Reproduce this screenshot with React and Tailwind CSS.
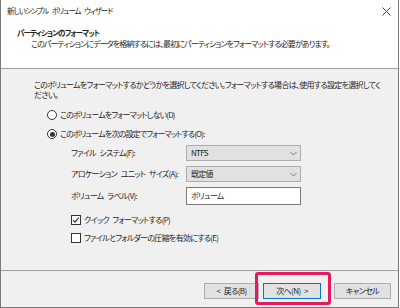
import React from "react";

const jp = "[font-family:'Noto_Sans_CJK_JP',sans-serif] [font-feature-settings:'palt']";

function T({ children, gap = "w-[3.5px]" }) {
  const parts = String(children).split(" ");
  return (
    <span>
      {parts.map((p, i) => (
        <React.Fragment key={i}>
          {i > 0 && <span className={`inline-block ${gap}`}> </span>}
          {p}
        </React.Fragment>
      ))}
    </span>
  );
}

function Radio({ checked }) {
  return (
    <span className="w-[10px] h-[10px] rounded-full border border-[#333] bg-white flex items-center justify-center shrink-0">
      {checked && <span className="w-[5px] h-[5px] rounded-full bg-[#333]" />}
    </span>
  );
}

function Check({ checked }) {
  return (
    <span className="w-[10px] h-[10px] border border-[#333] bg-white flex items-center justify-center shrink-0">
      {checked && (
        <svg width="8" height="8" viewBox="0 0 8 8">
          <path d="M1 4.2 L3 6.2 L7 1.5" fill="none" stroke="#222" strokeWidth="1.1" />
        </svg>
      )}
    </span>
  );
}

function Chevron() {
  return (
    <svg width="7" height="5" viewBox="0 0 7 5">
      <path d="M0.5 1 L3.5 4 L6.5 1" fill="none" stroke="#777" strokeWidth="0.9" />
    </svg>
  );
}

export default function App() {
  return (
    <div className={`w-[399px] h-[308px] bg-[#f0f0f0] flex flex-col border-l border-r border-b border-[#7a7a7a] text-[#1f1f1f] relative ${jp}`}>
      <div className="h-[69px] bg-white border-b border-[#a0a0a0] flex flex-col">
        <div className="h-[21px] flex items-center justify-between pl-[6px] pr-[6px] pt-[1px]">
          <span className="text-[7.5px] leading-[10px] tracking-[-1px] text-[#222]"><T>新しいシンプル ボリューム ウィザード</T></span>
          <svg width="9" height="9" viewBox="0 0 9 9" className="mr-[1px]">
            <path d="M0.5 0.5 L8.5 8.5 M8.5 0.5 L0.5 8.5" stroke="#444" strokeWidth="1" />
          </svg>
        </div>
        <div className="pl-[16px] mt-[7px] text-[7.5px] tracking-[-0.85px] leading-[10px] font-bold">パーティションのフォーマット</div>
        <div className="pl-[30px] mt-[1px] text-[8px] tracking-[-0.9px] leading-[10px]">このパーティションにデータを格納するには、最初にパーティションをフォーマットする必要があります。</div>
      </div>

      <div className="h-[202px] border-b border-[#a0a0a0] flex flex-col pl-[33px] pr-[18px] pt-[11px] text-[8px] tracking-[-0.7px]">
        <p className="leading-[10px]">このボリュームをフォーマットするかどうかを選択してください。フォーマットする場合は、使用する設定を選択してください。</p>
        <div className="mt-[9px] h-[12px] pl-[13px] flex items-center gap-[3px]">
          <Radio />
          <span className="tracking-[-0.85px]">このボリュームをフォーマットしない(D)</span>
        </div>
        <div className="mt-[7px] h-[12px] pl-[13px] flex items-center gap-[3px]">
          <Radio checked />
          <span className="tracking-[-0.85px]">このボリュームを次の設定でフォーマットする(O):</span>
        </div>
        <div className="pl-[37px] flex flex-col">
          <div className="mt-[5px] h-[16px] flex items-center">
            <span className="w-[115px]"><T>ファイル システム(F):</T></span>
            <div className="w-[115px] h-[16px] bg-[#e1e1e1] border border-[#adadad] flex items-center justify-between pl-[4px] pr-[3px]">
              <span>NTFS</span>
              <Chevron />
            </div>
          </div>
          <div className="mt-[5px] h-[16px] flex items-center">
            <span className="w-[115px]"><T>アロケーション ユニット サイズ(A):</T></span>
            <div className="w-[115px] h-[16px] bg-[#e1e1e1] border border-[#adadad] flex items-center justify-between pl-[4px] pr-[3px]">
              <span>既定値</span>
              <Chevron />
            </div>
          </div>
          <div className="mt-[5px] h-[18px] flex items-center">
            <span className="w-[115px]"><T>ボリューム ラベル(V):</T></span>
            <div className="w-[115px] h-[18px] bg-white border border-[#7a7a7a] flex items-center pl-[4px]">
              <span>ボリューム</span>
            </div>
          </div>
          <div className="mt-[9px] h-[12px] flex items-center gap-[3px]">
            <Check checked />
            <span><T>クイック フォーマットする(P)</T></span>
          </div>
          <div className="mt-[6px] h-[12px] flex items-center gap-[3px]">
            <Check />
            <span>ファイルとフォルダーの圧縮を有効にする(E)</span>
          </div>
        </div>
      </div>

      <div className="flex-1 flex items-start pt-[12px] pl-[203px] text-[8px] tracking-[-0.6px]">
        <div className="w-[55px] h-[16px] bg-[#e1e1e1] border border-[#adadad] flex items-center justify-center"><T>{"< 戻る(B)"}</T></div>
        <div className="ml-[4px] w-[58px] h-[16px] bg-[#e1e1e1] border border-[#0078d7] flex items-center justify-center"><T>{"次へ(N) >"}</T></div>
        <div className="ml-[13px] w-[57px] h-[16px] bg-[#e1e1e1] border border-[#adadad] flex items-center justify-center">キャンセル</div>
      </div>

      <div className="absolute left-[254px] top-[272px] w-[76px] h-[33px] border-[3px] border-[#e5195e] rounded-[3px] pointer-events-none" />
    </div>
  );
}
